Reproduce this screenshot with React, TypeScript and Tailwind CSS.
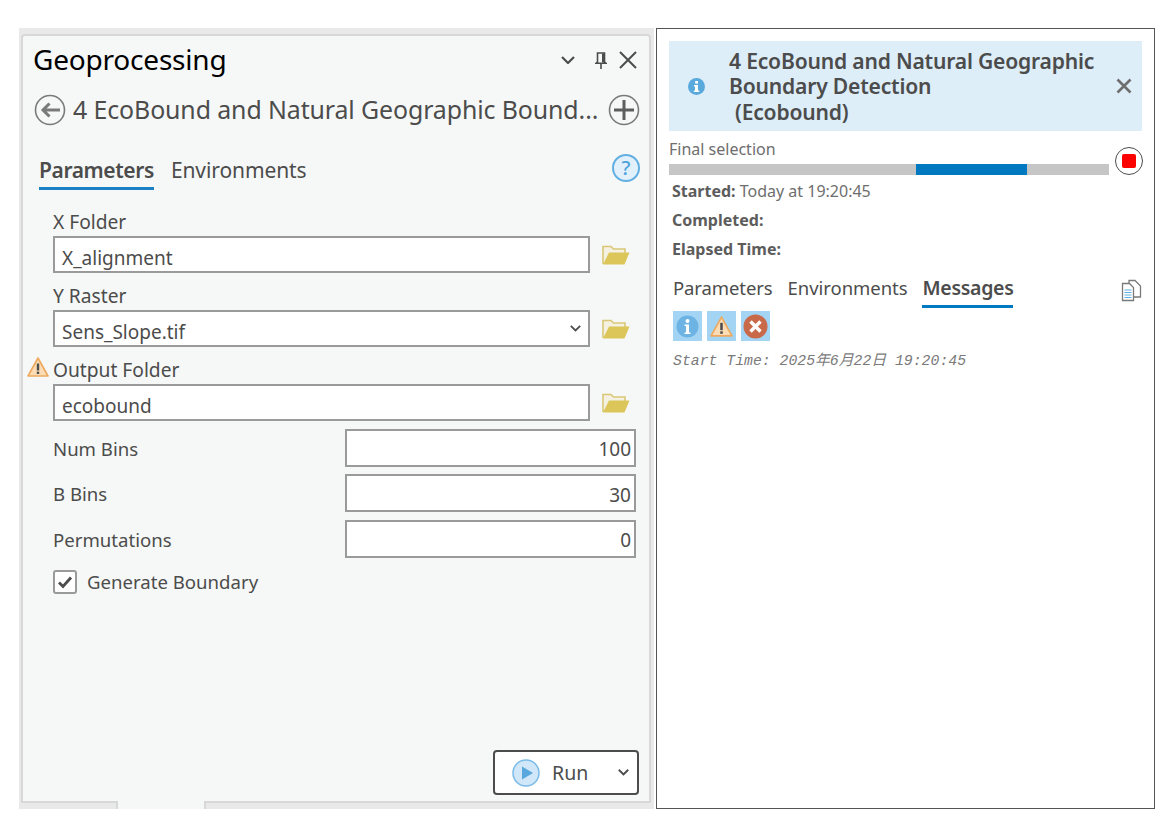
const font = 'font-["Noto_Sans",sans-serif]';

function Chevron({ w = 14, stroke = 2.4 }: { w?: number; stroke?: number }) {
  return (
    <svg width={w} height={w * 0.62} viewBox="0 0 14 8.7" className="shrink-0">
      <path d="M1 1 7 7l6-6" fill="none" stroke="#4c4c4c" strokeWidth={stroke} />
    </svg>
  );
}

function FolderIcon() {
  return (
    <svg width="28" height="21" viewBox="0 0 28 21" className="shrink-0">
      <path d="M1 20V2.5h8l2.5 2.5H23v5" fill="#f4f1e2" stroke="#d9c776" strokeWidth="1.6" />
      <path d="M7 8.5h20.5L22.5 20.5H1z" fill="#dcc65a" />
    </svg>
  );
}

function WarnIcon({ size = 22 }: { size?: number }) {
  return (
    <svg width={size} height={size} viewBox="0 0 22 22" className="shrink-0">
      <path d="M11 2 21 20H1z" fill="#fbdcb4" stroke="#eda95f" strokeWidth="1.6" strokeLinejoin="round" />
      <rect x="9.8" y="7.5" width="2.4" height="7" fill="#4c4c4c" />
      <rect x="9.8" y="15.6" width="2.4" height="2.4" fill="#4c4c4c" />
    </svg>
  );
}

function CircleBtn({ kind }: { kind: 'back' | 'add' }) {
  return (
    <svg width="32" height="32" viewBox="0 0 32 32" className="shrink-0">
      <circle cx="16" cy="16" r="14.5" fill="none" stroke="#7a7a7a" strokeWidth="1.6" />
      {kind === 'back' ? (
        <path d="M26 16H9M15.5 9.5 9 16l6.5 6.5" fill="none" stroke="#7a7a7a" strokeWidth="3" />
      ) : (
        <path d="M16 6v20M6 16h20" fill="none" stroke="#5c5c5c" strokeWidth="3" />
      )}
    </svg>
  );
}

function PathField({ label, value, warn, select }: { label: string; value: string; warn?: boolean; select?: boolean }) {
  return (
    <div className="h-[74px] relative">
      {warn && (
        <div className="absolute left-[-26px] top-[1px]">
          <WarnIcon size={22} />
        </div>
      )}
      <div className="h-[29px] text-[19.2px] leading-[30px] text-[#4c4c4c]">{label}</div>
      <div className="flex items-center">
        <div className="w-[537px] h-[37px] border-2 border-[#9a9a9a] bg-white px-[7px] flex items-center justify-between text-[19px] text-[#4c4c4c]">
          <span className="mt-[7px]">{value}</span>
          {select && <Chevron w={11} stroke={2.2} />}
        </div>
        <div className="ml-[12px]">
          <FolderIcon />
        </div>
      </div>
    </div>
  );
}

function NumField({ label, value }: { label: string; value: string }) {
  return (
    <div className="h-[45.5px] flex items-center">
      <div className="w-[292px] pt-[2px] text-[18.6px] text-[#4c4c4c]">{label}</div>
      <div className="w-[291px] h-[38px] border-2 border-[#9a9a9a] bg-white pt-[3px] px-[3px] flex items-center justify-end text-[19px] text-[#4c4c4c]">
        {value}
      </div>
    </div>
  );
}

function MsgFilter({ children }: { children: React.ReactNode }) {
  return <div className="w-[29px] h-[30px] bg-[#a3d4f3] flex items-center justify-center">{children}</div>;
}

export default function App() {
  return (
    <div className={`w-[1173px] h-[838px] bg-white pt-[28px] pl-[19px] flex ${font}`}>
      {/* Geoprocessing pane */}
      <div className="w-[635px] h-[781px] bg-[#e9e9e9] pt-[6px] pl-[2px] pr-[3px] pb-[6px] relative">
        <div className="h-full border-2 border-[#d8d8d8] rounded-t-[4px] bg-[#f6f8f7] flex flex-col">
          <div className="flex items-center h-[48px] pl-[10px] pr-[12px]">
            <div className="pb-[2px] text-[28px] text-black tracking-[-0.2px] flex-1">Geoprocessing</div>
            <Chevron w={14} stroke={2.2} />
            <svg width="12" height="17" viewBox="0 0 12 17" className="ml-[20px] mr-[12px] shrink-0">
              <path d="M2.5 1h7v9l1.5 1.2H1L2.5 10z" fill="#f6f8f7" stroke="#4c4c4c" strokeWidth="1.6" />
              <path d="M7 1.5h2.4v9H7z" fill="#4c4c4c" />
              <path d="M6 11v6" stroke="#4c4c4c" strokeWidth="1.6" />
            </svg>
            <svg width="18" height="18" viewBox="0 0 18 18" className="shrink-0">
              <path d="M1 1 17 17M17 1 1 17" stroke="#4c4c4c" strokeWidth="2" />
            </svg>
          </div>
          <div className="flex items-center h-[50px] mt-[1px] pl-[11px] pr-[9px]">
            <CircleBtn kind="back" />
            <div className="ml-[7px] flex-1 text-[24.9px] text-[#4c4c4c] tracking-[-0.1px] whitespace-nowrap overflow-hidden">
              4 EcoBound and Natural Geographic Bound...
            </div>
            <CircleBtn kind="add" />
          </div>
          <div className="flex items-end h-[46px] mt-[9px] pl-[16px] pr-[10px]">
            <div className="h-[46px] pt-[11px] text-[21px] font-semibold text-[#4c4c4c] border-b-[3px] border-[#1b80c4] leading-[30px] tracking-[-0.4px]">
              Parameters
            </div>
            <div className="h-[46px] pt-[11px] ml-[17px] text-[21px] text-[#4c4c4c] leading-[30px] tracking-[-0.1px]">Environments</div>
            <div className="ml-auto mb-[8px] mr-[-1px] w-[28px] h-[28px] rounded-full border-2 border-[#62afe2] bg-[#e2f0fb] text-[#4fa3dc] flex items-center justify-center text-[20px] font-medium">
              ?
            </div>
          </div>
          <div className="pl-[30px] mt-[17px]">
            <PathField label="X Folder" value="X_alignment" />
            <PathField label="Y Raster" value="Sens_Slope.tif" select />
            <PathField label="Output Folder" value="ecobound" warn />
            <div className="mt-[-4px]">
              <NumField label="Num Bins" value="100" />
              <NumField label="B Bins" value="30" />
              <NumField label="Permutations" value="0" />
            </div>
            <div className="flex items-center mt-[7px] h-[26px]">
              <div className="w-[24px] h-[24px] rounded-[3px] border-2 border-[#9a9a9a] bg-white flex items-center justify-center">
                <svg width="16" height="14" viewBox="0 0 16 14">
                  <path d="M2 7.5 6 11.5 14 2.5" fill="none" stroke="#4c4c4c" strokeWidth="2.8" />
                </svg>
              </div>
              <div className="ml-[10px] text-[18.6px] text-[#4c4c4c]">Generate Boundary</div>
            </div>
          </div>
          <div className="mt-auto mb-[6px] mr-[10px] self-end w-[146px] h-[45px] rounded-[4px] border-2 border-[#4c4c4c] bg-white flex items-center pl-[17px] pr-[8px]">
            <svg width="28" height="28" viewBox="0 0 28 28" className="shrink-0">
              <circle cx="14" cy="14" r="13" fill="#cfe7f8" stroke="#7bbbe8" strokeWidth="1.5" />
              <path d="M10 7.5 21 14 10 20.5z" fill="#58a7dd" />
            </svg>
            <span className="ml-[12px] flex-1 text-[19.5px] text-[#4c4c4c]">Run</span>
            <Chevron w={11} stroke={2.4} />
          </div>
        </div>
        {/* gap in the bottom border, where the tab joins the pane */}
        <div className="absolute left-[97px] bottom-0 w-[90px] h-[8px] bg-[#f6f8f7] border-x-2 border-[#d8d8d8]" />
      </div>

      {/* Tool progress pane */}
      <div className="w-[499px] h-[781px] ml-[2px] border border-[#555555] bg-white pl-[12px] pt-[12px]">
        <div className="w-[473px] h-[90px] bg-[#ddeef9] flex items-center pl-[19px] pr-[10px]">
          <svg width="17" height="17" viewBox="0 0 17 17" className="shrink-0">
            <circle cx="8.5" cy="8.5" r="8.5" fill="#5aa9dd" />
            <rect x="7.2" y="3" width="2.8" height="2.6" fill="#fff" />
            <path d="M6 7h4v5.5h1.2V14H5.8v-1.5H7V8.4H6z" fill="#fff" />
          </svg>
          <div className="ml-[24px] flex-1 flex flex-col text-[21.1px] leading-[25px] font-semibold text-[#4c4c4c] tracking-[-0.2px]">
            <div className="h-[25.5px]">4 EcoBound and Natural Geographic</div>
            <div className="h-[25.5px]">Boundary Detection</div>
            <div className="h-[25.5px] pl-[6px]">(Ecobound)</div>
          </div>
          <svg width="16" height="16" viewBox="0 0 16 16" className="shrink-0">
            <path d="M1.5 1.5 14.5 14.5M14.5 1.5 1.5 14.5" stroke="#6e6e6e" strokeWidth="2.6" />
          </svg>
        </div>
        <div className="flex items-start mt-[6px]">
          <div className="w-[440px]">
            <div className="h-[24px] text-[16px] leading-[24px] text-[#6e6e6e]">Final selection</div>
            <div className="mt-[3px] h-[11px] bg-[#c6c6c6] flex">
              <div className="ml-[247px] w-[111px] bg-[#0079c1]" />
            </div>
          </div>
          <div className="ml-[6px] mt-[10px] w-[28px] h-[28px] rounded-full border border-[#4c4c4c] bg-white flex items-center justify-center">
            <div className="w-[14px] h-[14px] rounded-[2px] bg-[#ff0000]" />
          </div>
        </div>
        <div className="mt-[2px] pl-[3px] text-[16px] text-[#6e6e6e]">
          <div className="h-[29px] leading-[29px]">
            <span className="font-bold text-[#5c5c5c]">Started:</span> Today at 19:20:45
          </div>
          <div className="h-[28.5px] leading-[28.5px] font-bold text-[#5c5c5c]">Completed:</div>
          <div className="h-[28.5px] leading-[28.5px] font-bold text-[#5c5c5c]">Elapsed Time:</div>
        </div>
        <div className="flex h-[42px] mt-[9px] pl-[4px] text-[18.5px] text-[#4c4c4c]">
          <div className="h-[36px] leading-[32px] tracking-[-0.1px]">Parameters</div>
          <div className="h-[36px] leading-[32px] ml-[15px] tracking-[-0.05px]">Environments</div>
          <div className="h-[36px] leading-[32px] ml-[15px] text-[19.5px] font-semibold border-b-[3px] border-[#0079c1] tracking-[-0.3px]">Messages</div>
          <svg width="21" height="23" viewBox="0 0 21 23" className="ml-auto mr-[12px] mt-[7px]">
            <path d="M8 1.5h6l5.5 5.5v11H8z" fill="#fff" stroke="#7a7a7a" strokeWidth="1.3" />
            <path d="M1.5 4.5h7l4 4v13h-11z" fill="#fff" stroke="#7a7a7a" strokeWidth="1.3" />
            <path d="M3.5 11h7M3.5 13.5h7M3.5 16h7M3.5 18.5h7" stroke="#62afe2" strokeWidth="1.2" />
          </svg>
        </div>
        <div className="flex gap-[5px] pl-[4px] mt-[-3px]">
          <MsgFilter>
            <svg width="23" height="23" viewBox="0 0 23 23">
              <circle cx="11.5" cy="11.5" r="11" fill="#6db4e4" />
              <circle cx="11.5" cy="6" r="2" fill="#fff" />
              <path d="M8.5 9.5h4.5v8h1.5v1.5h-6v-1.5H10v-6.5H8.5z" fill="#fff" />
            </svg>
          </MsgFilter>
          <MsgFilter>
            <WarnIcon size={23} />
          </MsgFilter>
          <MsgFilter>
            <svg width="25" height="25" viewBox="0 0 25 25">
              <circle cx="12.5" cy="12.5" r="12" fill="#c8694a" />
              <path d="M7.5 7.5 17.5 17.5M17.5 7.5 7.5 17.5" stroke="#fff" strokeWidth="3.4" />
            </svg>
          </MsgFilter>
        </div>
        <div className='mt-[9px] pl-[4px] text-[14.8px] italic text-[#7a7a7a] font-["Liberation_Mono","Noto_Sans_CJK_SC",monospace]'>
          Start Time: 2025年6月22日 19:20:45
        </div>
      </div>
    </div>
  );
}
